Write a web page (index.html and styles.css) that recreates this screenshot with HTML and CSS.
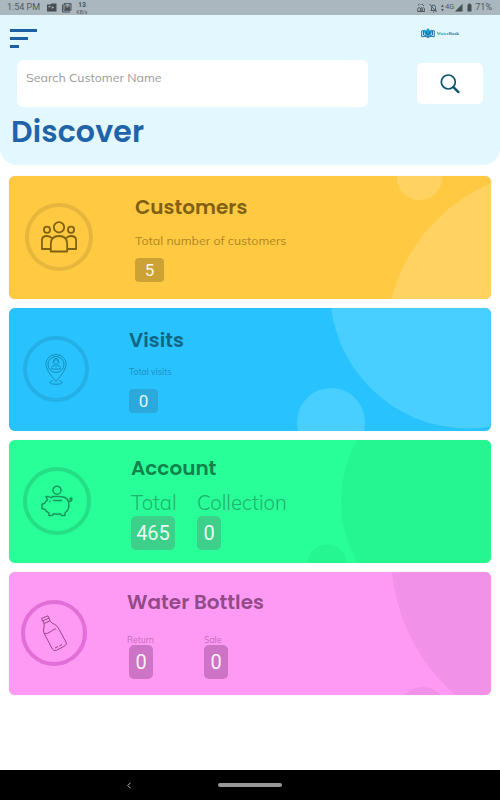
FILE: index.html
```html
<!DOCTYPE html>
<html lang="en">
<head>
    <meta charset="UTF-8">
    <meta name="viewport" content="width=device-width, initial-scale=1.0">
    <title>Discover</title>
    <link rel="stylesheet" href="styles.css">
</head>
<body>
    <div class="statusbar">
        <span class="time">1:54 PM</span>
        <svg class="status-left" width="25" height="10" viewBox="0 0 25 10">
            <path fill="#454d51" fill-rule="evenodd" d="M0 1.500h3.500l1-1h5v8H0zM1.500 3h2v1.200h-2zM4.800 3l2.200 1.500-2.200 1.500z"/>
            <path fill="none" stroke="#454d51" d="M15.500 1.500V9H23M17 .7h7v6.600h-7zM17.500 1.200l3 2.800 3-2.800"/>
            <path fill="#454d51" d="M18 3l2.500 2L23 3v4h-5z"/>
        </svg>
        <span class="speed"><b>13</b><small>KB/s</small></span>
        <div class="status-right">
            <svg width="20" height="10" viewBox="0 0 20 10" fill="none" stroke="#50595d">
                <path d="M.7 8.500V5.500l1.500-1 1.200 1v3M3.500 8.500v-3l.8-1 .8 1v3M5.200 8.500v-3l1.200-1 1 1v3M.8 2.500L2.500 1M5 1l2 2M3.500 1.500h1M.5 8.500h7"/>
                <path d="M13.500 7.500h6M14.500 7V4.500Q14.500 2 16.500 2T18.500 4.500V7M12.700 1l6.600 8M16 9h1.200"/>
            </svg>
            <svg width="3" height="8" viewBox="0 0 3 8" fill="#50595d"><path d="M0 3L1.500.5 3 3zM0 5h3L1.500 7.500z"/></svg>
            <span class="net">4G</span>
            <svg width="17" height="9" viewBox="0 0 17 9" fill="#454d51"><path d="M0 8.500L7.500 .8v7.700zM12.500 1.500h1V.5h2v1h1v7h-4z"/></svg>
            <span class="percent">71%</span>
        </div>
    </div>

    <div class="header">
        <div class="topline">
            <div class="menu"><i></i><i></i><i></i></div>
            <div class="logo">
                <svg width="14" height="10" viewBox="0 0 14 10">
                    <path fill="#1f9fd0" d="M7 0L9 2.500 11 1.500Q11.500 7 7 8 2.500 7 3 1.500L5 2.500z"/>
                    <path fill="none" stroke="#1d74b0" d="M2.500 2.500L.7 3v5.800Q4 7.500 7 9.400q3-1.900 6.300-.6V3l-1.800-.5M2.500 2.500V7Q5 7 7 9q2-2 4.500-2V2.500"/>
                    <path fill="none" stroke="#0e5e96" stroke-width=".8" d="M5 3.500Q5 6 7 7q2-1 2-3.500"/>
                </svg>
                <span><em>Water</em>Book</span>
            </div>
        </div>
        <div class="search-row">
            <div class="search">Search Customer Name</div>
            <div class="search-btn">
                <svg width="20" height="20" viewBox="0 0 20 20" fill="none" stroke="#0d5470">
                    <circle cx="8.300" cy="8" r="7" stroke-width="1.700"/>
                    <path d="M13.400 13.100l5 5" stroke-width="2.400" stroke-linecap="round"/>
                </svg>
            </div>
        </div>
        <h1>Discover</h1>
    </div>

    <div class="cards">
        <div class="card customers">
            <svg class="blobs" viewBox="0 0 482 123"><circle cx="410.500" cy="1.500" r="22.700"/><circle cx="551.400" cy="167.600" r="175"/></svg>
            <div class="ring">
                <svg width="36" height="32" viewBox="0 0 36 32" fill="none" stroke-width="1.800" stroke-linejoin="round">
                    <circle cx="18" cy="6.300" r="5.200"/>
                    <circle cx="6" cy="8.700" r="3.100"/>
                    <circle cx="30" cy="8.700" r="3.100"/>
                    <path d="M9.800 30.500V23Q9.800 15 18 15t8.200 8v7.500z"/>
                    <path d="M9.500 28H.9v-9Q1 15 6 15q3.200 0 4.800 2.200M26.500 28h8.600v-9Q35 15 30 15q-3.200 0-4.800 2.200"/>
                </svg>
            </div>
            <div class="info">
                <h2>Customers</h2>
                <p>Total number of customers</p>
                <span class="count">5</span>
            </div>
        </div>

        <div class="card visits">
            <svg class="blobs" viewBox="0 0 482 123"><circle cx="459" cy="-17.600" r="138"/><circle cx="322" cy="114" r="34"/></svg>
            <div class="ring">
                <svg width="22" height="31" viewBox="0 0 22 31" fill="none">
                    <path d="M11 27.500Q.8 16 .8 10.500a10.200 10 0 0 1 20.400 0Q21.200 16 11 27.500z"/>
                    <circle cx="11" cy="10.500" r="8"/>
                    <circle cx="11" cy="8" r="2.300"/>
                    <path d="M6.500 15v-1.500q.5-1.800 3-2.200l1.500 1.500 1.500-1.500q2.500.4 3 2.200V15zM8.500 9V7q0-2.500 2.500-2.500T13.500 7v2M7.500 26.800q-2.700.3-2.700 1.600 0 1.800 6.200 1.800t6.200-1.800q0-1.300-2.700-1.600"/>
                </svg>
            </div>
            <div class="info">
                <h2>Visits</h2>
                <p>Total visits</p>
                <span class="count">0</span>
            </div>
        </div>

        <div class="card account">
            <svg class="blobs" viewBox="0 0 482 123"><circle cx="456" cy="61" r="124"/><circle cx="318" cy="124" r="19.600"/></svg>
            <div class="ring">
                <svg width="32" height="32" viewBox="0 0 32 32" fill="none" stroke-width="1.500" stroke-linejoin="round" stroke-linecap="round">
                    <circle cx="16" cy="5.200" r="4"/>
                    <path d="M5 11.500l1.500 3.300Q4.200 16.500 3.500 18.500L1 19v4.500l3.200 1q1 2.300 3.800 3.500v2.500h3.500l.8-1.700q3.700.8 7.200 0l.8 1.700H24V28q4-3 4-8 0-8-8.500-8.500h-7.500l-2 1.300q-2-1.800-5-1.300z"/>
                    <path d="M12.500 15.500h8M9 16.500v.3M27.300 16.500q3.500.2 3.700-2.300 0-1.500-1.500-1.200-1 .8 0 1.700"/>
                </svg>
            </div>
            <div class="info">
                <h2>Account</h2>
                <div class="stats">
                    <div><p>Total</p><span class="count">465</span></div>
                    <div><p>Collection</p><span class="count">0</span></div>
                </div>
            </div>
        </div>

        <div class="card bottles">
            <svg class="blobs" viewBox="0 0 482 123"><circle cx="571.600" cy="-19" r="189.600"/><circle cx="413.500" cy="140" r="25"/></svg>
            <div class="ring">
                <svg width="28" height="37" viewBox="0 0 28 37" fill="none" stroke-width="1" stroke-linejoin="round">
                    <path d="M1.500 3.500L8 .8l1 2.400-6.500 2.800zM3 6l1 2.500 6-2.600-1-2.600M4 8.500Q4.500 12 3.700 14q-.6 2 .2 4l8.500 16q1.500 2.500 4 1.300l8.400-4.300q2.400-1.500 1.200-4L18 12.500q-1-2-3.200-3Q12 8.500 10 5.900M4.500 18.500q3 .5 5.500-1.500t6-3.500M15 33l3-1.500M19.300 31l2.700-1.500"/>
                </svg>
            </div>
            <div class="info">
                <h2>Water Bottles</h2>
                <div class="stats">
                    <div><p>Return</p><span class="count">0</span></div>
                    <div><p>Sale</p><span class="count">0</span></div>
                </div>
            </div>
        </div>
    </div>

    <div class="navbar">
        <svg width="4" height="7" viewBox="0 0 4 7" fill="none" stroke="#b5b5b5"><path d="M3.500 .7L.8 3.500l2.700 2.800"/></svg>
        <div class="pill"></div>
    </div>
</body>
</html>
```

FILE: styles.css
```css
* {
    box-sizing: border-box;
}

body {
    margin: 0;
    height: 800px;
    display: flex;
    flex-direction: column;
    overflow: hidden;
    background-color: #ffffff;
    font-family: Muli, Mulish, Nunito, "Open Sans", sans-serif;
}

h1, h2, p {
    margin: 0;
}

h1, h2 {
    font-family: Poppins, Inter, sans-serif;
    font-weight: 600;
}

svg {
    display: block;
    flex: none;
}

/* Status bar */
.statusbar {
    height: 15px;
    display: flex;
    align-items: center;
    padding: 0 8px 0 7px;
    background-color: #aab7be;
    color: #50595d;
    font-family: Roboto, sans-serif;
    font-size: 9px;
    line-height: 15px;
}

.time {
    width: 40px;
    white-space: nowrap;
}

.speed {
    width: 20px;
    padding-top: 1px;
    text-align: center;
}

.speed b {
    display: block;
    font-size: 7px;
    line-height: 7px;
}

.speed small {
    display: block;
    font-size: 5px;
    line-height: 6px;
}

.status-right {
    display: flex;
    align-items: center;
    margin-left: auto;
}

.status-right svg:nth-child(2) {
    margin-left: 4px;
}

.net {
    width: 9px;
    margin: 0 1px;
    font-size: 7px;
}

.percent {
    margin-left: 3px;
}

/* Header */
.header {
    height: 150px;
    padding: 12px 0 0;
    background-color: #e3f7ff;
    border-radius: 0 0 17px 17px;
}

.topline {
    height: 33px;
    display: flex;
    justify-content: space-between;
    padding: 0 41px 0 10px;
}

.menu {
    padding-top: 2px;
}

.menu i {
    display: block;
    width: 27px;
    height: 3px;
    margin-bottom: 5px;
    background-color: #1c5fa3;
}

.menu i:nth-child(2) {
    width: 18px;
}

.menu i:nth-child(3) {
    width: 9px;
}

.logo {
    height: 12px;
    display: flex;
    align-items: center;
    gap: 2px;
    font: bold 4.6px "Liberation Serif", serif;
    color: #3674a0;
}

.logo em {
    font-style: normal;
    color: #28a2ba;
}

.search-row {
    display: flex;
    align-items: center;
    padding: 0 17px;
    justify-content: space-between;
}

.search {
    width: 351px;
    height: 47px;
    padding: 9px;
    border-radius: 6px;
    background-color: #ffffff;
    color: #9b9b9b;
    font-size: 12.4px;
    line-height: 17px;
}

.search-btn {
    width: 66px;
    height: 41px;
    display: flex;
    align-items: center;
    justify-content: center;
    border-radius: 5px;
    background-color: #ffffff;
}

h1 {
    padding-left: 11px;
    margin-top: 4px;
    color: #2063a8;
    font-size: 30px;
    line-height: 41px;
    letter-spacing: 0.15px;
}

/* Cards */
.cards {
    flex: 1;
    display: flex;
    flex-direction: column;
    gap: 9px;
    padding: 11px 9px 0;
}

.card {
    position: relative;
    height: 123px;
    display: flex;
    overflow: hidden;
    border-radius: 6px;
    box-shadow: 0 0 1px rgba(0, 0, 0, 0.25);
}

.blobs {
    position: absolute;
    left: 0;
    top: 0;
    width: 482px;
    height: 123px;
}

.ring {
    position: relative;
    flex: none;
    width: 68px;
    height: 68px;
    display: flex;
    align-items: center;
    justify-content: center;
    border: 4px solid;
    border-radius: 50%;
}

.info {
    position: relative;
}

h2 {
    font-size: 20px;
    line-height: 28px;
    white-space: nowrap;
}

.count {
    display: flex;
    align-items: center;
    justify-content: center;
    width: 24px;
    height: 34px;
    border-radius: 5px;
    color: rgba(255, 255, 255, 0.92);
    font: 20px Roboto, sans-serif;
}

.customers .count,
.visits .count {
    width: 29px;
    height: 24px;
    border-radius: 4px;
    font-size: 17px;
}

.stats {
    display: flex;
}

/* Card themes */
.customers { background-color: #ffca41; color: #806012; }
.customers .blobs { fill: #ffd262; }
.customers .ring { margin: 27px 42px 0 16px; border-color: #e7b63c; stroke: #806012; }
.customers h2 { margin-top: 17px; }
.customers p { margin-top: 10px; font-size: 12.35px; line-height: 20px; color: #ae8625; }
.customers .count { margin-top: 7px; background-color: #cca234; }

.visits { background-color: #28c3ff; color: #126582; }
.visits .blobs { fill: #48cfff; }
.visits .ring { width: 66px; height: 66px; margin: 28px 40px 0 14px; border-color: #24b0e6; stroke: #178dbb; }
.visits h2 { margin-top: 18px; }
.visits p { margin-top: 12px; font-size: 8.7px; line-height: 12px; color: #1b8fbc; }
.visits .count { margin-top: 11px; background-color: #2ba9da; }

.account { background-color: #28ff98; color: #12824b; }
.account .blobs { fill: #25f691; }
.account .ring { margin: 27px 40px 0 14px; border-color: #25df86; stroke: #17985a; }
.account h2 { margin-top: 14px; }
.account .stats { gap: 21px; margin-top: 6px; }
.account p { font-size: 20.4px; font-weight: 300; line-height: 28px; color: #1fb36d; }
.account .stats div:first-child { width: 45px; }
.account .stats div:first-child .count { width: 44px; }
.account .count { background-color: #3cd08a; }

.bottles { background-color: #ff9af4; color: #924a89; }
.bottles .blobs { fill: #f291e8; }
.bottles .ring { width: 66px; height: 66px; margin: 28px 40px 0 12px; border-color: #e16fd7; stroke: #924a89; }
.bottles h2 { margin-top: 16px; }
.bottles .stats { margin-top: 18px; }
.bottles p { height: 11px; font-size: 8.7px; line-height: 12px; color: #c16eb8; }
.bottles .stats div:first-child { width: 77px; }
.bottles .stats div:first-child .count { margin-left: 2px; }
.bottles .count { background-color: #ce74c6; }

/* Navigation bar */
.navbar {
    height: 30px;
    display: flex;
    align-items: center;
    padding-left: 127px;
    background-color: #000000;
}

.pill {
    width: 64px;
    height: 4px;
    margin-left: 87px;
    border-radius: 2px;
    background-color: #999999;
}
```
